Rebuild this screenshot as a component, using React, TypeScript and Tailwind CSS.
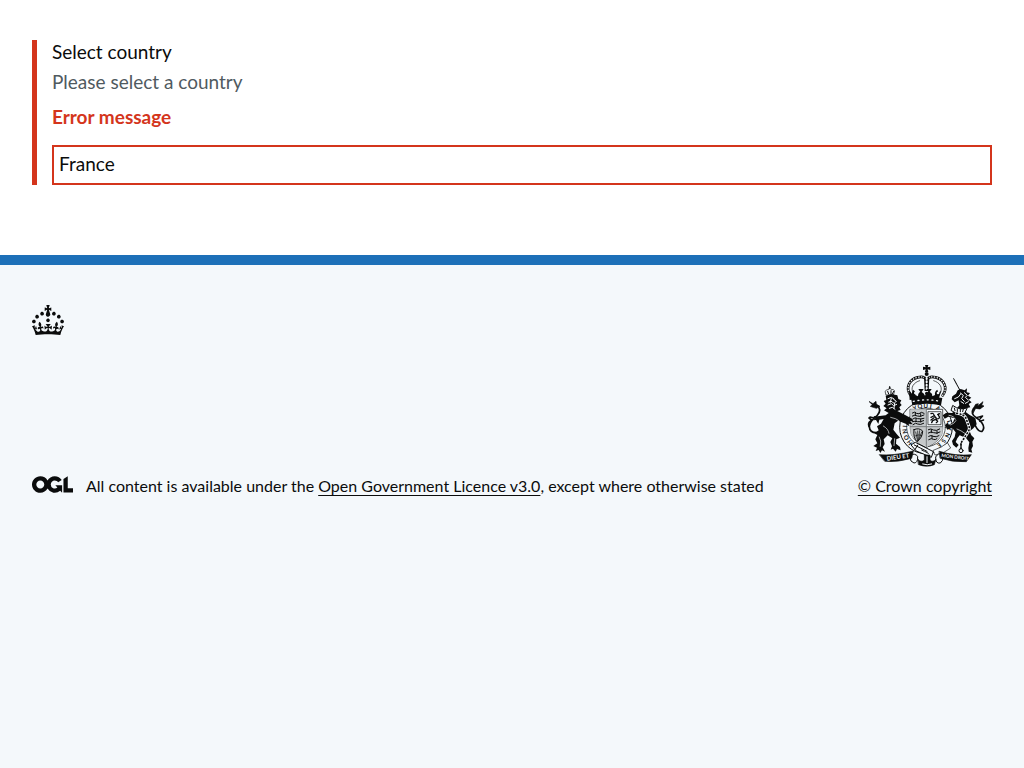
import type { ReactNode } from "react";

const INK = "#0b0c0c";
const PAPER = "#f4f8fb";

function Crown() {
  return (
    <svg className="h-[30px] w-8" viewBox="0 0 32 30" fill="currentColor" aria-hidden="true">
      <path
        fillRule="evenodd"
        clipRule="evenodd"
        d="M22.6 10.4c-1 .4-2-.1-2.4-1-.4-.9.1-2 1-2.4.9-.4 2 .1 2.4 1s-.1 2-1 2.4m-5.9 6.7c-.9.4-2-.1-2.4-1-.4-.9.1-2 1-2.4.9-.4 2 .1 2.4 1s-.1 2-1 2.4m10.8-3.7c-1 .4-2-.1-2.4-1-.4-.9.1-2 1-2.4.9-.4 2 .1 2.4 1s0 2-1 2.4m3.3 4.8c-1 .4-2-.1-2.4-1-.4-.9.1-2 1-2.4.9-.4 2 .1 2.4 1s-.1 2-1 2.4M17 4.7l2.3 1.2V2.5l-2.3.7-.2-.2.9-3h-3.4l.9 3-.2.2c-.1.1-2.3-.7-2.3-.7v3.4L15 4.7c.1.1.1.2.2.2l-1.3 4c-.1.2-.1.4-.1.6 0 1.1.8 2 1.9 2.2h.7c1-.2 1.9-1.1 1.9-2.1 0-.2 0-.4-.1-.6l-1.3-4c-.1-.2 0-.2.1-.3m-7.6 5.7c.9.4 2-.1 2.4-1 .4-.9-.1-2-1-2.4-.9-.4-2 .1-2.4 1s0 2 1 2.4m-5 3c.9.4 2-.1 2.4-1 .4-.9-.1-2-1-2.4-.9-.4-2 .1-2.4 1s.1 2 1 2.4m-3.2 4.8c.9.4 2-.1 2.4-1 .4-.9-.1-2-1-2.4-.9-.4-2 .1-2.4 1s0 2 1 2.4m14.8 11c4.4 0 8.6.3 12.3.8 1.1-4.5 2.4-7 3.7-8.8l-2.5-.9c.2 1.3.3 1.9 0 2.7-.4-.4-.8-1.1-1.1-2.3l-1.2 4c.7-.5 1.3-.8 2-.9-1.1 2.5-2.6 3.1-3.5 3-1.1-.2-1.7-1.2-1.5-2.1.3-1.2 1.5-1.5 2.1-.1 1.1-2.3-.8-3-2-2.3 1.9-1.9 2.1-3.5.6-5.6-2.1 1.6-2.1 3.2-1.2 5.5-1.2-1.4-3.2-.6-2.5 1.6.9-1.4 2.1-.5 1.9.8-.2 1.1-1.7 2.1-3.5 1.9-2.7-.2-2.9-2.1-2.9-3.6.7-.1 1.9.5 2.9 1.9l.4-4.3c-1.1 1.1-2.1 1.4-3.2 1.4.4-1.2 2.1-3 2.1-3h-5.4s1.7 1.9 2.1 3c-1.1 0-2.1-.2-3.2-1.4l.4 4.3c1-1.4 2.2-2 2.9-1.9-.1 1.5-.2 3.4-2.9 3.6-1.9.2-3.4-.8-3.5-1.9-.2-1.3 1-2.2 1.9-.8.7-2.3-1.2-3-2.5-1.6.9-2.2.9-3.9-1.2-5.5-1.5 2-1.3 3.7.6 5.6-1.2-.7-3.1 0-2 2.3.6-1.4 1.8-1.1 2.1.1.2.9-.3 1.9-1.5 2.1-.9.2-2.4-.5-3.5-3 .6 0 1.2.3 2 .9l-1.2-4c-.3 1.1-.7 1.9-1.1 2.3-.3-.8-.2-1.4 0-2.7l-2.9.9C1.3 23 2.6 25.5 3.7 30c3.7-.5 7.9-.8 12.3-.8"
      />
    </svg>
  );
}

function OglLogo() {
  return (
    <svg className="h-[17px] w-[41px] shrink-0" viewBox="0 0 483.2 195.7" fill="currentColor" aria-hidden="true">
      <path d="M421.5 142.8V.1l-50.7 32.3v161.1h112.4v-50.7zm-122.3-9.6A47.12 47.12 0 0 1 221 97.8c0-26 21.1-47.1 47.1-47.1 16.7 0 31.4 8.7 39.7 21.8l42.7-27.2A97.63 97.63 0 0 0 268.1 0c-36.5 0-68.3 20.1-85.1 49.7A98 98 0 0 0 97.8 0C43.9 0 0 43.9 0 97.8s43.9 97.8 97.8 97.8c36.5 0 68.3-20.1 85.1-49.7a97.76 97.76 0 0 0 149.6 25.4l19.4 22.2h3v-87.8h-80l24.3 27.5zM97.8 145c-26 0-47.1-21.1-47.1-47.1s21.1-47.1 47.1-47.1 47.1 21.1 47.1 47.1S123.8 145 97.8 145" />
    </svg>
  );
}

function RoyalArms() {
  return (
    <svg className="h-[102px] w-[125px]" viewBox="0 0 375 306" fill="none" stroke={INK} strokeLinecap="round" strokeLinejoin="round" aria-hidden="true">
      {/* garter */}
      <circle cx="189" cy="187" r="79" fill={PAPER} strokeWidth="3" />
      <circle cx="189" cy="187" r="58" strokeWidth="2" />
      <g fill={INK} stroke="none" fontFamily="Lato, sans-serif" fontWeight="700" fontSize="18" textAnchor="middle">
        <text x="158" y="135" transform="rotate(-24 158 135)">Y</text>
        <text x="172" y="130" transform="rotate(-12 172 130)">Q</text>
        <text x="188" y="129">U</text>
        <text x="202" y="130" transform="rotate(10 202 130)">I</text>
        <text x="222" y="136" transform="rotate(28 222 136)">A</text>
        <text x="132" y="184" transform="rotate(-86 132 184)">I</text>
        <text x="132" y="198" transform="rotate(-98 132 198)">N</text>
        <text x="136" y="215" transform="rotate(-112 136 215)">O</text>
        <text x="145" y="229" transform="rotate(-126 145 229)">H</text>
        <text x="253" y="172" transform="rotate(78 253 172)">L</text>
        <text x="252" y="190" transform="rotate(94 252 190)">Y</text>
        <text x="247" y="208" transform="rotate(112 247 208)">N</text>
        <text x="237" y="224" transform="rotate(128 237 224)">S</text>
        <text x="225" y="236" transform="rotate(142 225 236)">E</text>
      </g>

      {/* quartered shield */}
      <path d="M142 133H239V193Q239 226 190 248Q142 226 142 193Z" fill={PAPER} strokeWidth="2" />
      <path d="M142 133H189V185H142ZM190 185H239V197Q238 224 190 246Z" fill="#c3c7c9" stroke="none" />
      <path d="M142 185H189V244Q143 225 142 197Z" fill="#c6c9ca" stroke="none" />
      <path d="M190 133V246M142 185H239" stroke="#777b7c" strokeWidth="3" />
      <path d="M148 144q7-6 12 1q8 4 15-3l8 3M148 153q8-5 15 0q8 4 20-3M149 162q8-7 15-1q10 2 19-1M148 170q8-2 15 0q9 2 19-3M150 179q9-8 14-2q8 4 18-2M157 142v9m16-5v8m-14 6v9m14-6v8" strokeWidth="3" />
      <path d="M196 194q8-5 15 1q9 4 19-3M196 204q9-6 16-1q9 4 19-2M197 214q8-5 13 0q10 4 18-2M197 224q9-6 14-1q6 3 11-2M205 194v9m17-5v8m-15 6v8" strokeWidth="3" />
      <rect x="196" y="140" width="38" height="39" strokeWidth="2" />
      <path d="M204 146q7-3 9 4l3 5q5 3 3 9l5 5-4 4M212 153l-8 4M213 158l-9 7M216 164l-7 3-3 6M219 161q12 2 10-6q-5-5 0-9M224 149l5-3" strokeWidth="4" />
      <path d="M153 194q15-7 26 4q-1 21-17 32q-12-12-9-36Z" strokeWidth="3" />
      <path d="M158 201l6 27M164 198l1 29M170 197l-3 27M176 201l-8 22M156 213q10-6 20-2" strokeWidth="2" />

      {/* imperial crown */}
      <path d="M186 0h10l-2 7 8-2v10l-8-2 2 8h-10l2-8-8 2V5l8 2z" fill={INK} stroke="none" />
      <circle cx="191" cy="27" r="6" fill={INK} stroke="none" />
      <path d="M149 104C129 82 130 48 165 38Q184 31 191 42Q198 31 217 38C252 48 253 82 233 104Z" fill={PAPER} stroke="none" />
      <path d="M143 91C126 69 139 43 164 37Q184 32 190 44" strokeWidth="8" />
      <path d="M239 91C256 69 243 43 218 37Q198 32 192 44" strokeWidth="8" />
      <path d="M143 91C126 69 139 43 164 37Q184 32 190 44M239 91C256 69 243 43 218 37Q198 32 192 44" stroke={PAPER} strokeWidth="4" strokeDasharray="1 7" />
      <path d="M151 85C140 67 153 52 170 47M231 85C242 67 229 52 212 47" strokeWidth="2" />
      <path d="M183 36h16l-2 42h-12z" fill={INK} stroke="none" />
      <path d="M191 39V74" stroke={PAPER} strokeWidth="6" strokeDasharray="3 7" />
      <path d="M138 77q5 2 8 9l4-12q9 6 7 16l8 4q0-11 7-13l-6-9h16l-6 9q7 3 10 11q3-9 10-11l-6-9h16l-6 9q8 3 8 13l8-4q-2-11 7-16l4 12q3-7 8-9l-9 28q-42-8-86 0Z" fill={INK} stroke="none" />
      <circle cx="157" cy="84" r="4" fill={PAPER} stroke="none" />
      <circle cx="225" cy="84" r="4" fill={PAPER} stroke="none" />
      <circle cx="191" cy="85" r="5" fill={INK} stroke="none" />
      <path d="M144 99Q191 88 238 99L234 121Q191 111 148 121Z" fill={INK} stroke="none" />
      <path d="M151 109Q191 100 231 109" stroke={PAPER} strokeWidth="4" strokeDasharray="3 11" />

      {/* lion */}
      <path d="M67 78q5-6 10-4l3-9 5 9q7-3 10 4l-4 12H70z" fill={PAPER} strokeWidth="2" />
      <path d="M74 79l3 8m7-10v10m8-8l-4 8M80 65v6" strokeWidth="3" />
      <path d="M68 92L85 87L103 91L106 102L115 106L111 114L116 120L109 127L113 135L103 138L125 149L147 161L151 169L141 168L149 178L137 176L139 184L128 176L105 167L95 175L91 194L101 207L111 218L100 223L99 236L111 246L113 256L102 252L98 260L90 251L83 254L87 244L82 231L88 220L74 211L62 223L65 237L59 247L66 260L57 256L52 264L47 255L38 258L42 248L31 243L43 235L37 223L43 210L34 205L47 196L42 184L54 176L62 162L49 164L46 177L39 165L31 166L37 159L31 153L44 154L68 151L77 144L63 136L71 130L61 123L68 116L62 108L70 105Z" fill={INK} stroke="none" />
      <path d="M75 101l10-4 8 5M77 111q8-6 12 1t9-1M75 120l10-4 7 6 9-4M79 130l9-3 8 6M92 103l8 6M85 100l-3 12m13 3l-2 15" stroke={PAPER} strokeWidth="3" />
      <path d="M83 157q17 3 25 10M61 183q15 8 17 22M49 216q7 10 3 28M95 221l-2 21" stroke={PAPER} strokeWidth="2" />
      <path d="M42 203Q20 204 19 185Q20 171 33 160Q57 142 47 126Q41 116 28 124" strokeWidth="5" />
      <path d="M19 110L30 116L39 109L40 118L51 124L40 130L22 124L28 120Z" fill={INK} strokeWidth="2" />
      <path d="M18 184Q14 174 23 168M33 159l-12-3m5 9l-8-6" strokeWidth="5" />

      {/* unicorn */}
      <path d="M272 41L291 76" strokeWidth="3" strokeDasharray="5 1" />
      <path d="M266 103L268 94L279 86L284 76L293 72L305 76L312 70L311 82L321 84L315 92L325 98L317 104L326 112L317 117L322 127L312 129L307 140L320 150L337 159L341 178L331 190L320 199L325 211L334 220L328 230L330 243L325 253L328 263L317 260L316 249L319 232L309 219L290 211L283 220L278 231L287 240L280 248L270 239L267 228L275 216L278 202L267 188L253 194L246 181L253 173L258 179L270 172L275 160L256 155L245 161L239 151L250 143L267 144L276 138L289 121L287 106L275 112Z" fill={INK} stroke="none" />
      <path d="M275 101l11-5 7-9M292 84l9 7-5 10 8 8M304 83l9 8-6 6 9 8M294 110l8 5M307 115l9-5" stroke={PAPER} strokeWidth="3" />
      <path d="M270 122q22 16 43 6l-8 17q-20 5-40-8z" fill={PAPER} strokeWidth="3" />
      <path d="M274 129l2 8m7-5v8m9-7v8m9-9l-2 8" strokeWidth="3" />
      <path d="M281 145q23 3 28 15l9 24q4 8-6 22l-18 28v18" stroke={PAPER} strokeWidth="9" />
      <path d="M281 145q23 3 28 15l9 24q4 8-6 22l-18 28v18" strokeWidth="5" strokeDasharray="2 8" />
      <path d="M294 235v15" strokeWidth="4" strokeDasharray="3 5" />
      <circle cx="294" cy="257" r="6" strokeWidth="3" />
      <path d="M258 151q16 2 19 12M262 180q13-4 17-13M282 192q12 4 25 14" stroke={PAPER} strokeWidth="2" />
      <path d="M333 172Q344 203 357 199Q367 189 357 174Q349 163 340 158Q321 146 331 132Q337 124 350 129" strokeWidth="5" />
      <path d="M331 130L338 118L346 116L344 123L360 110L356 121L363 123L351 132L338 130L330 145Z" fill={INK} strokeWidth="2" />
      <path d="M340 158l19-5-9 10M350 169l12-4" strokeWidth="4" />

      {/* buckle and motto scroll */}
      <path d="M145 239L157 232L211 260L205 277L160 258Z" fill={PAPER} strokeWidth="3" />
      <path d="M164 240l-8 14M154 240l38 19M176 255l8 4M187 260l9 5" strokeWidth="3" />
      <path d="M211 256Q239 247 253 233L263 249Q242 267 217 270Z" fill={PAPER} strokeWidth="2" />
      <path d="M143 269q13-5 21 5q1 20-11 20q-12-4-12-15ZM238 266q-14-2-20 10q-1 21 14 18q9-5 8-20Z" fill={PAPER} strokeWidth="3" />
      <path d="M165 283q9 11 19 2v-15h17v15q9 9 18-3l-5 17q-23 9-47 0Z" fill={INK} strokeWidth="2" />
      <path d="M179 297q14 5 27 0M192 275v18" stroke={PAPER} strokeWidth="3" />
      <path d="M50 269Q91 273 151 258L146 280Q103 293 66 289Z" fill={INK} strokeWidth="2" />
      <path d="M229 259Q279 274 325 269L310 290Q272 293 232 280Z" fill={INK} strokeWidth="2" />
      <g fill={PAPER} stroke="none" fontFamily="Lato, sans-serif" fontWeight="700">
        <text x="72" y="287" transform="rotate(-8 72 287)" fontSize="18">DIEU ET</text>
        <text x="235" y="276" transform="rotate(7 235 276)" fontSize="14">MON DROIT</text>
      </g>
    </svg>
  );
}

function FooterLink({ href, children }: { href: string; children: ReactNode }) {
  return (
    <a href={href} className="underline decoration-1 underline-offset-3">
      {children}
    </a>
  );
}

export default function App() {
  return (
    <div className="flex min-h-screen flex-col bg-white font-[Lato,sans-serif] text-[#0b0c0c]">
      <main className="px-8 pt-10 pb-[70px]">
        <div className="flex flex-col border-l-[5px] border-[#d4351c] pl-[15px] text-[19px] leading-6">
          <label htmlFor="country">Select country</label>
          <p id="country-hint" className="mt-1.5 text-[#505a5f]">
            Please select a country
          </p>
          <p id="country-error" className="mt-[11px] font-bold text-[#d4351c]">
            Error message
          </p>
          <select
            id="country"
            defaultValue="fr"
            aria-invalid="true"
            aria-describedby="country-hint country-error"
            className="mt-4 h-10 w-full appearance-none rounded-none border-2 border-[#d4351c] bg-white px-[5px] pb-0.5"
          >
            <option value="fr">France</option>
            <option value="de">Germany</option>
            <option value="gb">United Kingdom</option>
          </select>
        </div>
      </main>
      <footer className="grow border-t-[10px] border-[#1d70b8] bg-[#f4f8fb] px-8 pt-10">
        <Crown />
        <div className="mt-[30px] flex flex-wrap items-end justify-between gap-x-8 gap-y-6 leading-5">
          <div className="flex items-start gap-[13px]">
            <OglLogo />
            <span>
              All content is available under the <FooterLink href="#licence">Open Government Licence v3.0</FooterLink>, except where otherwise stated
            </span>
          </div>
          <div className="flex flex-col items-end gap-[9px]">
            <div className="self-center pl-0.5">
              <RoyalArms />
            </div>
            <FooterLink href="#copyright">© Crown copyright</FooterLink>
          </div>
        </div>
      </footer>
    </div>
  );
}
